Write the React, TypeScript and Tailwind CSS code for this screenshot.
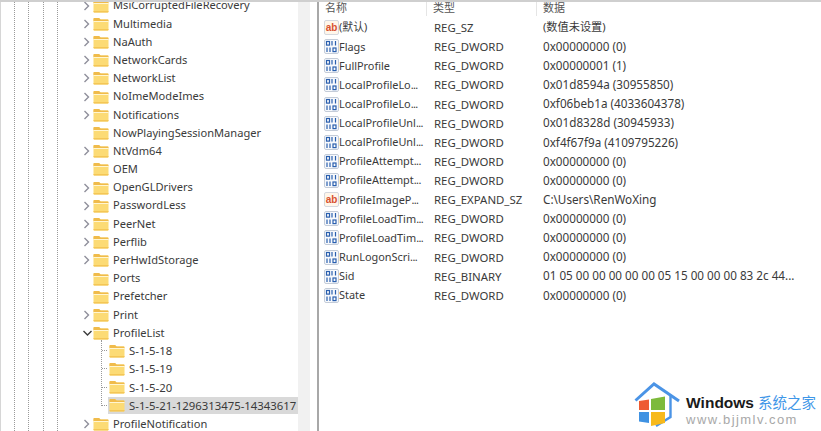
import React from "react";

const treeTop = ["Multimedia","NaAuth","NetworkCards","NetworkList","NoImeModeImes","Notifications","NowPlayingSessionManager","NtVdm64","OEM","OpenGLDrivers","PasswordLess","PeerNet","Perflib","PerHwIdStorage","Ports","Prefetcher","Print"];
const noChevron = new Set(["NowPlayingSessionManager","OEM","Ports","Prefetcher"]);
const kids = ["S-1-5-18","S-1-5-19","S-1-5-20","S-1-5-21-1296313475-14343617"];
const rows: [string,string,string,string][] = [
  ["ab","(默认)","REG_SZ","(数值未设置)"],
  ["b","Flags","REG_DWORD","0x00000000 (0)"],
  ["b","FullProfile","REG_DWORD","0x00000001 (1)"],
  ["b","LocalProfileLo...","REG_DWORD","0x01d8594a (30955850)"],
  ["b","LocalProfileLo...","REG_DWORD","0xf06beb1a (4033604378)"],
  ["b","LocalProfileUnl...","REG_DWORD","0x01d8328d (30945933)"],
  ["b","LocalProfileUnl...","REG_DWORD","0xf4f67f9a (4109795226)"],
  ["b","ProfileAttempt...","REG_DWORD","0x00000000 (0)"],
  ["b","ProfileAttempt...","REG_DWORD","0x00000000 (0)"],
  ["ab","ProfileImageP...","REG_EXPAND_SZ","C:\\Users\\RenWoXing"],
  ["b","ProfileLoadTim...","REG_DWORD","0x00000000 (0)"],
  ["b","ProfileLoadTim...","REG_DWORD","0x00000000 (0)"],
  ["b","RunLogonScri...","REG_DWORD","0x00000000 (0)"],
  ["b","Sid","REG_BINARY","01 05 00 00 00 00 00 05 15 00 00 00 83 2c 44..."],
  ["b","State","REG_DWORD","0x00000000 (0)"],
];

function Folder() {
  return (
    <svg width="16" height="14" viewBox="0 0 16 14" className="shrink-0">
      <path d="M0.5 2C0.5 1.4 1 1 1.6 1H6L7.6 2.4H14.6C15.2 2.4 15.5 2.8 15.5 3.4V12.6C15.5 13.2 15.1 13.6 14.5 13.6H1.5C0.9 13.6 0.5 13.2 0.5 12.6Z" fill="#fcdb75" />
      <path d="M0.5 2C0.5 1.4 1 1 1.6 1H6L7.6 2.4H15.2L15.5 4H0.5Z" fill="#f0bb4b" />
      <path d="M0.5 4H15.5V5H0.5Z" fill="#fff6d2" />
      <path d="M0.5 12H15.5V12.6C15.5 13.2 15.1 13.6 14.5 13.6H1.5C0.9 13.6 0.5 13.2 0.5 12.6Z" fill="#f4c656" />
    </svg>
  );
}

function Chevron({ open }: { open?: boolean }) {
  return (
    <svg width="10" height="10" viewBox="0 0 10 10" className="shrink-0" fill="none" stroke={open ? "#3c3c3c" : "#8f8f9b"} strokeWidth="1.4">
      {open ? <path d="M0.5 3L4.5 7L8.5 3" /> : <path d="M1.5 1L5.5 5L1.5 9" />}
    </svg>
  );
}

function TreeRow({ name, open }: { name: string; open?: boolean }) {
  return (
    <div className="flex h-[18.2px] items-center pl-[83px]">
      <div className="flex w-[10px] items-center">
        {noChevron.has(name) ? null : <Chevron open={open} />}
      </div>
      <div className="mr-[4px]"><Folder /></div>
      <span className="whitespace-nowrap">{name}</span>
    </div>
  );
}

function RegIcon({ type }: { type: string }) {
  if (type === "ab")
    return (
      <span className="flex h-[15px] w-[15px] shrink-0 items-center justify-center rounded-[2px] border border-[#d5d8de] bg-[#fff6ea] font-['Liberation_Sans',sans-serif] text-[10px] font-bold leading-none text-[#d8502f]">
        ab
      </span>
    );
  return (
    <svg width="15" height="15" viewBox="0 0 15 15" className="shrink-0">
      <rect x="0.5" y="0.5" width="14" height="14" rx="1.5" fill="#f7f9fc" stroke="#c4ccd8" />
      <g fill="none" stroke="#2a5fae" strokeWidth="1.2">
        <rect x="2.5" y="2.5" width="3" height="3.6" />
        <path d="M8 2V6.5M11.5 2V6.5" />
        <path d="M3 8.5V13M6 8.5V13" />
        <rect x="9" y="9" width="3" height="3.6" />
      </g>
    </svg>
  );
}

function RowName({ text }: { text: string }) {
  const cut = text.endsWith("...");
  return (
    <span className="whitespace-nowrap text-[10.9px]">
      {cut ? text.slice(0, -3) : text}
      {cut ? <span className="tracking-[-0.6px]">...</span> : null}
    </span>
  );
}

function Logo() {
  return (
    <div className="flex items-start pl-[12px] pr-[5px]">
      <svg width="48" height="50" viewBox="0 0 48 50" className="shrink-0">
        <path d="M1.5 19.5L20 3L45 20" fill="none" stroke="#4b94e6" strokeWidth="3" />
        <path d="M36.5 14V36L22 45" fill="none" stroke="#4b94e6" strokeWidth="2.4" />
        <path d="M5 20L15 18.5V29H5Z" fill="#ee5a32" />
        <path d="M17 18L31 15.5V29H17Z" fill="#7dba3b" />
        <path d="M5 31H15V42L5 40.5Z" fill="#3f92e2" />
        <path d="M17 31H31V42L17 45Z" fill="#f7b91c" />
      </svg>
      <div className="ml-[4px] mt-[11px] flex flex-col font-['Liberation_Sans',sans-serif]">
        <div className="flex items-baseline leading-[19px]">
          <span className="text-[15.5px] font-bold text-[#1a1a1a]">Windows</span>
          <span className="ml-[4px] font-['Noto_Sans_CJK_SC',sans-serif] text-[14.5px] text-[#3f97e8]">系统之家</span>
        </div>
        <span className="text-[13px] leading-[15px] tracking-[1.45px] text-[#a8a8a8]">www.bjjmlv.com</span>
      </div>
    </div>
  );
}

export default function App() {
  return (
    <div className="relative h-[431px] w-[821px] overflow-hidden border-t-2 border-[#cfcfcf] bg-white font-['Noto_Sans','Noto_Sans_CJK_SC',sans-serif] text-[#3a3a3a]">
      <div className="flex h-full">
        <div className="relative h-full w-[298px] shrink-0 overflow-hidden border-l border-[#d6d6d6] text-[11.1px]">
          <span className="absolute bottom-0 left-[13px] top-0 border-l border-dotted border-[#9a9a9a]" />
          <span className="absolute bottom-0 left-[27px] top-0 border-l border-dotted border-[#9a9a9a]" />
          <span className="absolute bottom-0 left-[42px] top-0 border-l border-dotted border-[#9a9a9a]" />
          <span className="absolute bottom-0 left-[56px] top-0 border-l border-dotted border-[#9a9a9a]" />
          <span className="absolute left-[100px] top-[338px] h-[66px] border-l border-dotted border-[#9a9a9a]" />
          <div className="ml-[-1px] mt-[-5.4px]">
            <TreeRow name="MsiCorruptedFileRecovery" />
            {treeTop.map((n) => <TreeRow key={n} name={n} />)}
            <TreeRow name="ProfileList" open />
            {kids.map((k, i) => (
              <div key={k} className="flex h-[18.2px] items-center pb-[1px] pl-[102px]">
                <span className="mr-[1px] w-[5px] border-t border-dotted border-[#9a9a9a]" />
                <div className={`flex h-[17px] w-[190px] items-center gap-[4px] pl-[1px] ${i === 3 ? "bg-[#d9d9d9]" : ""}`}>
                  <Folder />
                  <span className="whitespace-nowrap text-[11.35px]">{k}</span>
                </div>
              </div>
            ))}
            <TreeRow name="ProfileNotification" />
          </div>
        </div>
        <div className="flex h-full w-[21px] shrink-0">
          <div className="w-[12px] bg-[#f1f1f1]" />
          <div className="w-[7px]" />
          <div className="w-[2px] bg-[#a8a8a8]" />
        </div>
        <div className="flex-1 overflow-hidden">
          <div className="mt-[-4px] flex h-[20px] items-center pl-[6px] text-[11px] text-[#555]">
            <span className="w-[102px] border-r border-[#e5e5e5]">名称</span>
            <span className="w-[110px] border-r border-[#e5e5e5] pl-[6px]">类型</span>
            <span className="pl-[6px]">数据</span>
          </div>
          {rows.map((r, i) => (
            <div key={i} className="flex h-[19.14px] items-center pl-[5px]">
              <div className="flex w-[110px] items-center gap-[0px]">
                <RegIcon type={r[0]} />
                <RowName text={r[1]} />
              </div>
              <span className="w-[109px] text-[11.4px]">{r[2]}</span>
              <span className={`whitespace-nowrap ${i === 0 ? "text-[11.2px]" : "text-[11.7px]"}`}>{r[3]}</span>
            </div>
          ))}
        </div>
      </div>
      <div className="absolute bottom-0 right-0 bg-white"><Logo /></div>
    </div>
  );
}
